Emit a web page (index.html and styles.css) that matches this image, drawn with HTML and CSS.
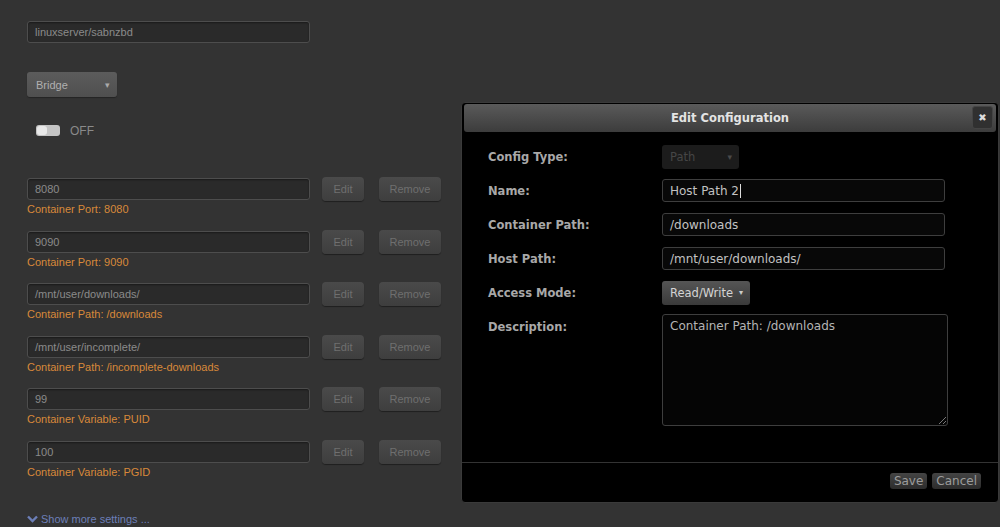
FILE: index.html
```html
<!DOCTYPE html>
<html lang="en">
  <head>
    <meta charset="UTF-8" />
    <title>Docker container settings</title>
    <link rel="stylesheet" href="styles.css">
  </head>
  <body>
    <div class="page">
      <div class="repo"><span class="field wide">linuxserver/sabnzbd</span></div>

      <div class="network">
        <span class="select">Bridge <span class="caret">&#9662;</span></span>
      </div>

      <div class="privileged">
        <span class="toggle"><span class="knob"></span></span>
        <span class="toggle-text">OFF</span>
      </div>

      <div class="config-list">
        <div class="config">
          <div class="config-row">
            <span class="field wide">8080</span>
            <button class="btn edit">Edit</button>
            <button class="btn remove">Remove</button>
          </div>
          <div class="config-label">Container Port: 8080</div>
        </div>
        <div class="config">
          <div class="config-row">
            <span class="field wide">9090</span>
            <button class="btn edit">Edit</button>
            <button class="btn remove">Remove</button>
          </div>
          <div class="config-label">Container Port: 9090</div>
        </div>
        <div class="config">
          <div class="config-row">
            <span class="field wide">/mnt/user/downloads/</span>
            <button class="btn edit">Edit</button>
            <button class="btn remove">Remove</button>
          </div>
          <div class="config-label">Container Path: /downloads</div>
        </div>
        <div class="config">
          <div class="config-row">
            <span class="field wide">/mnt/user/incomplete/</span>
            <button class="btn edit">Edit</button>
            <button class="btn remove">Remove</button>
          </div>
          <div class="config-label">Container Path: /incomplete-downloads</div>
        </div>
        <div class="config">
          <div class="config-row">
            <span class="field wide">99</span>
            <button class="btn edit">Edit</button>
            <button class="btn remove">Remove</button>
          </div>
          <div class="config-label">Container Variable: PUID</div>
        </div>
        <div class="config">
          <div class="config-row">
            <span class="field wide">100</span>
            <button class="btn edit">Edit</button>
            <button class="btn remove">Remove</button>
          </div>
          <div class="config-label">Container Variable: PGID</div>
        </div>
      </div>

      <div class="more">
        <svg class="chevron" width="11" height="8" viewBox="0 0 11 8">
          <path d="M1 1.5 L5.5 6 L10 1.5" fill="none" stroke="#6c7fb8" stroke-width="2.4" />
        </svg>
        <span>Show more settings ...</span>
      </div>
    </div>

    <div class="dialog">
      <div class="dialog-title">
        <span>Edit Configuration</span>
        <span class="close">&#10006;</span>
      </div>
      <div class="dialog-body">
        <label>Config Type:</label>
        <div><span class="dselect disabled">Path <span class="caret">&#9662;</span></span></div>

        <label>Name:</label>
        <div><span class="dinput">Host Path 2<span class="cursor"></span></span></div>

        <label>Container Path:</label>
        <div><span class="dinput">/downloads</span></div>

        <label>Host Path:</label>
        <div><span class="dinput">/mnt/user/downloads/</span></div>

        <label>Access Mode:</label>
        <div><span class="dselect mode">Read/Write <span class="caret">&#9662;</span></span></div>

        <label class="top">Description:</label>
        <div class="top"><span class="dtext">Container Path: /downloads<span class="grip"></span></span></div>
      </div>
      <div class="dialog-foot">
        <button class="dbtn">Save</button>
        <button class="dbtn">Cancel</button>
      </div>
    </div>
  </body>
</html>
```

FILE: styles.css
```css
*,
*::before,
*::after {
  box-sizing: border-box;
  padding: 0;
  margin: 0;
}
body {
  width: 1000px;
  height: 527px;
  overflow: hidden;
  position: relative;
  background: #333;
  font-family: "Liberation Sans", Arial, sans-serif;
  font-size: 11px;
  color: #999;
}
.page {
  padding: 21px 0 0 27px;
}
.field {
  display: flex;
  align-items: center;
  height: 22px;
  padding: 0 7px;
  border: 1px solid #4d4d4d;
  border-radius: 3px;
  background: #2a2a2a;
  box-shadow: inset 0 1px 2px rgba(0, 0, 0, 0.4);
  color: #8a8a8a;
}
.wide {
  width: 283px;
}
.network {
  margin-top: 29px;
}
.select {
  display: flex;
  align-items: center;
  justify-content: space-between;
  width: 90px;
  height: 25px;
  padding: 0 7px 0 9px;
  border-radius: 3px;
  background: linear-gradient(#5c5c5c, #4f4f4f);
  box-shadow: 0 1px 1px rgba(0, 0, 0, 0.3);
  color: #b0b0b0;
}
.caret {
  font-size: 9px;
  color: #aaa;
}
.privileged {
  display: flex;
  align-items: center;
  gap: 10px;
  margin: 28px 0 0 9px;
  height: 11px;
}
.toggle {
  display: block;
  width: 24px;
  height: 11px;
  border-radius: 3px;
  background: #c4c4c4;
  position: relative;
}
.knob {
  position: absolute;
  left: 1px;
  top: 1px;
  width: 10px;
  height: 9px;
  border-radius: 3px;
  background: #e8e8e8;
}
.toggle-text {
  font-size: 12px;
  color: #8a8a8a;
}
.config-list {
  margin-top: 41px;
}
.config {
  height: 52.6px;
}
.config-row {
  display: flex;
  align-items: center;
  height: 24px;
}
.btn {
  height: 24px;
  border: none;
  border-radius: 4px;
  background: linear-gradient(#4a4a4a, #3e3e3e);
  box-shadow: 0 1px 1px rgba(0, 0, 0, 0.4);
  font-family: "Liberation Sans", Arial, sans-serif;
  font-size: 11px;
  color: #6f6f6f;
}
.edit {
  width: 42px;
  margin-left: 12px;
}
.remove {
  width: 62px;
  margin-left: 15px;
}
.config-label {
  height: 17px;
  line-height: 17px;
  color: #d8893a;
  font-size: 11px;
}
.more {
  display: flex;
  align-items: center;
  gap: 3px;
  margin-top: 20px;
  color: #6c7fb8;
  font-size: 11px;
}
.dialog {
  position: absolute;
  left: 461px;
  top: 102px;
  width: 538px;
  height: 401px;
  background: #000;
  border: 1px solid #3a3a3a;
  border-radius: 4px;
  font-family: "DejaVu Sans", Verdana, sans-serif;
  font-size: 11px;
  display: flex;
  flex-direction: column;
}
.dialog-title {
  display: flex;
  align-items: center;
  justify-content: center;
  margin: 1px 2px 0;
  height: 28px;
  border-radius: 3px;
  background: linear-gradient(#5a5a5a, #3c3c3c);
  color: #e4e4e4;
  font-weight: bold;
  font-size: 11.5px;
  position: relative;
}
.close {
  position: absolute;
  right: 3px;
  top: 2px;
  width: 21px;
  height: 23px;
  display: flex;
  align-items: center;
  justify-content: center;
  border: 1px solid #444;
  border-radius: 3px;
  background: #303030;
  color: #ddd;
  font-size: 10px;
}
.dialog-body {
  display: grid;
  grid-template-columns: 174px 1fr;
  grid-auto-rows: 24px;
  row-gap: 10px;
  align-items: center;
  padding: 13px 0 0 26px;
  height: 331px;
}
.dialog-body label {
  color: #a8a8a8;
  font-weight: bold;
  font-size: 11.5px;
}
.dialog-body label.top {
  align-self: start;
  padding-top: 5px;
}
.dialog-body div.top {
  align-self: start;
}
.dselect {
  display: inline-flex;
  align-items: center;
  justify-content: space-between;
  height: 24px;
  padding: 0 7px 0 8px;
  border-radius: 3px;
  font-size: 11.5px;
}
.dselect.disabled {
  width: 77px;
  background: #1c1c1c;
  color: #464646;
}
.dselect.disabled .caret {
  color: #4a4a4a;
}
.dselect.mode {
  width: 88px;
  background: linear-gradient(#555, #3a3a3a);
  color: #d4d4d4;
}
.dselect.mode .caret {
  color: #ccc;
  font-size: 8px;
}
.dinput {
  display: flex;
  align-items: center;
  width: 283px;
  height: 23px;
  padding: 0 7px;
  border: 1px solid #3e3e3e;
  border-radius: 3px;
  background: #080808;
  color: #c2c2c2;
  font-size: 12px;
}
.cursor {
  display: inline-block;
  width: 1px;
  height: 14px;
  margin-left: 1px;
  background: #ddd;
}
.dtext {
  display: block;
  position: relative;
  width: 286px;
  height: 112px;
  padding: 4px 7px;
  border: 1px solid #3e3e3e;
  border-radius: 3px;
  background: #050505;
  color: #b4b4b4;
  font-size: 12px;
  margin-top: -1px;
}
.grip {
  position: absolute;
  right: 1px;
  bottom: 1px;
  width: 7px;
  height: 7px;
  background: linear-gradient(135deg, transparent 45%, #777 45%, #777 55%, transparent 55%, transparent 75%, #777 75%, #777 85%, transparent 85%);
}
.dialog-foot {
  margin-top: auto;
  border-top: 1px solid #333;
  height: 40px;
  display: flex;
  justify-content: flex-end;
  gap: 5px;
  padding: 10px 17px 0 0;
}
.dbtn {
  height: 16px;
  padding: 0 4px;
  border: none;
  border-radius: 3px;
  background: linear-gradient(#444, #2c2c2c);
  color: #9c9c9c;
  font-family: "DejaVu Sans", Verdana, sans-serif;
  font-size: 12px;
  line-height: 16px;
}
```
